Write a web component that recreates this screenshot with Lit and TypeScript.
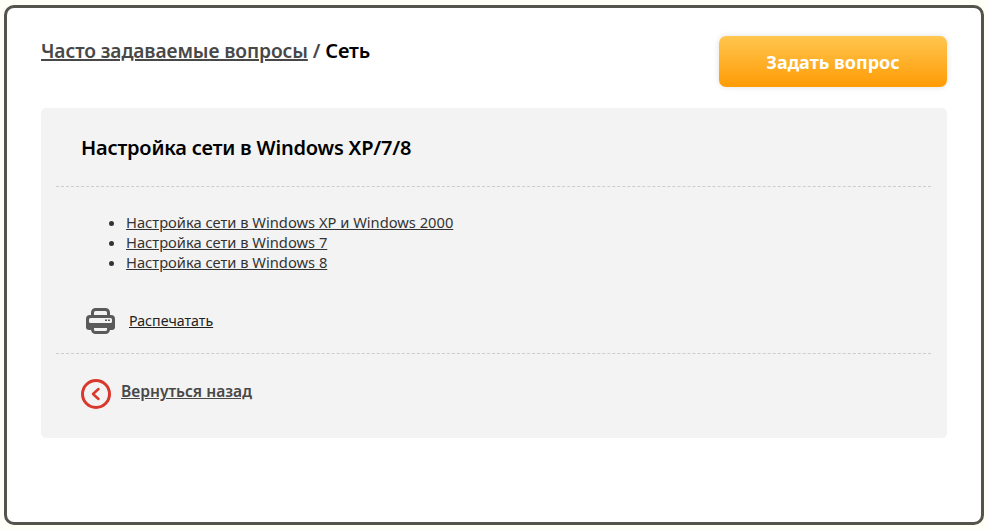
import { LitElement, html, css } from 'lit';
import { customElement } from 'lit/decorators.js';

const links = [
  'Настройка сети в Windows XP и Windows 2000',
  'Настройка сети в Windows 7',
  'Настройка сети в Windows 8',
];

@customElement('app-root')
export class AppRoot extends LitElement {
  static styles = css`
    :host {
      display: block;
      height: 530px;
      box-sizing: border-box;
      padding: 5px 4px 5px 4px;
      background: #fffff8;
      font-family: 'Noto Sans', 'Open Sans', sans-serif;
      color: #484848;
    }
    a {
      color: inherit;
    }
    .frame {
      box-sizing: border-box;
      height: 520px;
      border: 3px solid #54544c;
      border-radius: 10px;
      background: #fff;
      padding: 28px 34px 0 34px;
    }
    .head {
      display: flex;
      justify-content: space-between;
      align-items: flex-start;
      height: 72px;
    }
    .crumbs {
      margin-top: 2px;
      font-size: 19.2px;
      line-height: 26px;
      font-weight: 600;
      letter-spacing: -0.1px;
    }
    .crumbs a {
      text-decoration-thickness: 2px;
    }
    .crumbs b {
      color: #000;
      font-weight: 600;
      font-size: 20px;
    }
    .ask {
      width: 228px;
      height: 51px;
      box-sizing: border-box;
      display: flex;
      align-items: center;
      justify-content: center;
      border-radius: 7px;
      background: linear-gradient(#ffc64f, #ff9b05);
      box-shadow: 0 0 6px rgba(0, 0, 0, 0.12);
      color: #fff;
      font-size: 18px;
      font-weight: 700;
    }
    .card {
      height: 330px;
      box-sizing: border-box;
      background: #f3f3f3;
      border-radius: 5px;
      padding: 0 16px 0 15px;
    }
    h1 {
      margin: 0;
      height: 79px;
      box-sizing: border-box;
      padding: 25px 0 0 25px;
      font-size: 20px;
      line-height: 30px;
      font-weight: 600;
      color: #000;
      letter-spacing: -0.2px;
      border-bottom: 1px dashed #cdcdcd;
    }
    ul {
      margin: 0;
      padding: 25px 0 0 70px;
      font-size: 14.7px;
      line-height: 20px;
      height: 109px;
      box-sizing: border-box;
      color: #333;
    }
    .print {
      display: flex;
      align-items: center;
      gap: 13px;
      height: 58px;
      padding: 0 0 8px 29px;
      box-sizing: border-box;
      border-bottom: 1px dashed #cdcdcd;
      font-size: 14.2px;
      color: #222;
    }
    .print svg {
      display: block;
    }
    .back {
      display: flex;
      align-items: flex-start;
      gap: 10px;
      padding: 21px 0 0 25px;
      font-size: 15.6px;
      font-weight: 600;
      color: #484848;
    }
    .back svg {
      display: block;
      margin-top: 4px;
    }
    .back a {
      margin-top: 5px;
    }
  `;

  render() {
    return html`
      <div class="frame">
        <div class="head">
          <div class="crumbs"><a href="#">Часто задаваемые вопросы</a> / <b>Сеть</b></div>
          <div class="ask">Задать вопрос</div>
        </div>
        <div class="card">
          <h1>Настройка сети в Windows XP/7/8</h1>
          <ul>
            ${links.map((l) => html`<li><a href="#">${l}</a></li>`)}
          </ul>
          <div class="print">
            <svg width="31" height="26" viewBox="0 0 31 26">
              <path d="M7.500 8V4.500A3 3 0 0 1 10.500 1.500H20.500A3 3 0 0 1 23.500 4.500V8" fill="none" stroke="#5a5a5a" stroke-width="3"/>
              <path d="M5 7H26A4 4 0 0 1 30 11V19A3 3 0 0 1 27 22H4A3 3 0 0 1 1 19V11A4 4 0 0 1 5 7Z" fill="#5a5a5a"/>
              <rect x="4" y="10" width="23" height="5" rx="1.500" fill="#f3f3f3"/>
              <rect x="20" y="11.500" width="2" height="1.500" fill="#5a5a5a"/>
              <rect x="23" y="11.500" width="2" height="1.500" fill="#5a5a5a"/>
              <path d="M7.500 18.500H23.500V21.500A3 3 0 0 1 20.500 24.500H10.500A3 3 0 0 1 7.500 21.500Z" fill="#f3f3f3" stroke="#5a5a5a" stroke-width="3"/>
            </svg>
            <a href="#">Распечатать</a>
          </div>
          <div class="back">
            <svg width="30" height="30" viewBox="0 0 30 30">
              <circle cx="15" cy="15" r="13.500" fill="none" stroke="#d9382c" stroke-width="3"/>
              <path d="M17.500 10L12 15L17.500 20" fill="none" stroke="#d9382c" stroke-width="2.500" stroke-linecap="round" stroke-linejoin="round"/>
            </svg>
            <a href="#">Вернуться назад</a>
          </div>
        </div>
      </div>
    `;
  }
}
